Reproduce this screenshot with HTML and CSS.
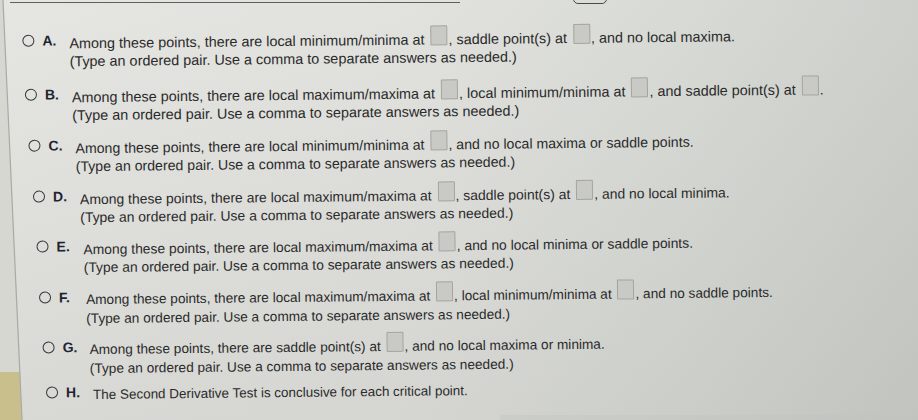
FILE: index.html
```html
<!DOCTYPE html>
<html lang="en">
<head>
<meta charset="utf-8">
<title>Second Derivative Test</title>
<link rel="stylesheet" href="styles.css">
</head>
<body>
<div class="screen">
  <div class="topbar">
    <div class="topline"></div>
    <div class="topbtn"></div>
  </div>
  <div class="options">
    <div class="opt">
      <span class="radio"></span><span class="letter">A.</span>
      <div class="txt">
        <div class="l1">Among these points, there are local minimum/minima at <span class="box"></span>, saddle point(s) at <span class="box"></span>, and no local maxima.</div>
        <div class="l2">(Type an ordered pair. Use a comma to separate answers as needed.)</div>
      </div>
    </div>
    <div class="opt">
      <span class="radio"></span><span class="letter">B.</span>
      <div class="txt">
        <div class="l1">Among these points, there are local maximum/maxima at <span class="box"></span>, local minimum/minima at <span class="box"></span>, and saddle point(s) at <span class="box"></span>.</div>
        <div class="l2">(Type an ordered pair. Use a comma to separate answers as needed.)</div>
      </div>
    </div>
    <div class="opt">
      <span class="radio"></span><span class="letter">C.</span>
      <div class="txt">
        <div class="l1">Among these points, there are local minimum/minima at <span class="box"></span>, and no local maxima or saddle points.</div>
        <div class="l2">(Type an ordered pair. Use a comma to separate answers as needed.)</div>
      </div>
    </div>
    <div class="opt">
      <span class="radio"></span><span class="letter">D.</span>
      <div class="txt">
        <div class="l1">Among these points, there are local maximum/maxima at <span class="box"></span>, saddle point(s) at <span class="box"></span>, and no local minima.</div>
        <div class="l2">(Type an ordered pair. Use a comma to separate answers as needed.)</div>
      </div>
    </div>
    <div class="opt">
      <span class="radio"></span><span class="letter">E.</span>
      <div class="txt">
        <div class="l1">Among these points, there are local maximum/maxima at <span class="box"></span>, and no local minima or saddle points.</div>
        <div class="l2">(Type an ordered pair. Use a comma to separate answers as needed.)</div>
      </div>
    </div>
    <div class="opt">
      <span class="radio"></span><span class="letter">F.</span>
      <div class="txt">
        <div class="l1">Among these points, there are local maximum/maxima at <span class="box"></span>, local minimum/minima at <span class="box"></span>, and no saddle points.</div>
        <div class="l2">(Type an ordered pair. Use a comma to separate answers as needed.)</div>
      </div>
    </div>
    <div class="opt">
      <span class="radio"></span><span class="letter">G.</span>
      <div class="txt">
        <div class="l1">Among these points, there are saddle point(s) at <span class="box"></span>, and no local maxima or minima.</div>
        <div class="l2">(Type an ordered pair. Use a comma to separate answers as needed.)</div>
      </div>
    </div>
    <div class="opt">
      <span class="radio"></span><span class="letter">H.</span>
      <div class="txt">
        <div class="l1">The Second Derivative Test is conclusive for each critical point.</div>
      </div>
    </div>
  </div>
</div>
</body>
</html>
```
FILE: styles.css
```css
html, body {
  margin: 0;
  padding: 0;
}
body {
  width: 918px;
  height: 420px;
  overflow: hidden;
  font-family: "Liberation Sans", Arial, sans-serif;
  color: #2a2a2a;
  background:
    url("data:image/svg+xml;utf8,<svg xmlns='http://www.w3.org/2000/svg' width='918' height='420' viewBox='0 0 918 420'><polygon points='0,0 3,0 22,420 0,420' fill='%23d6d7d1'/><polygon points='0,372 20,372 22,420 0,420' fill='%23c9bf8c'/><line x1='3' y1='0' x2='22' y2='420' stroke='%23a9aaa4' stroke-width='1.2'/><rect x='500' y='415' width='418' height='5' fill='%23bfc2bd' opacity='0.35'/></svg>") no-repeat 0 0,
    linear-gradient(to bottom, rgba(255,255,255,0.05), rgba(0,0,0,0.05)),
    linear-gradient(to right, #e4e4e0 0%, #e0e1dd 45%, #d6d8d3 75%, #cbcec9 100%);
}
.screen {
  width: 918px;
  height: 420px;
}
.topbar {
  display: flex;
  align-items: flex-start;
  height: 6px;
  overflow: hidden;
}
.topline {
  width: 450px;
  margin-left: 10px;
  margin-top: 2px;
  height: 0;
  border-top: 1.5px solid #5e5f5c;
}
.topbtn {
  width: 32px;
  height: 10px;
  margin-left: 113px;
  margin-top: -8px;
  border: 1.5px solid #4a4a48;
  border-radius: 5px;
}
.options {
  display: flex;
  flex-direction: column;
  padding-top: 28px;
  transform: rotate(-0.6deg);
  transform-origin: 0 0;
}
.opt {
  display: flex;
  align-items: flex-start;
}
.opt:nth-child(1) { margin-left: 22px; }
.opt:nth-child(2) { margin-left: 24px; margin-top: 17px; }
.opt:nth-child(3) { margin-left: 27px; margin-top: 14px; }
.opt:nth-child(4) { margin-left: 31px; margin-top: 14px; }
.opt:nth-child(5) { margin-left: 34px; margin-top: 13px; }
.opt:nth-child(6) { margin-left: 36px; margin-top: 14px; }
.opt:nth-child(7) { margin-left: 39px; margin-top: 13px; }
.opt:nth-child(8) { margin-left: 42px; margin-top: 8px; }
.opt:nth-child(1) .txt,
.opt:nth-child(2) .txt { font-size: 14.4px; }
.opt:nth-child(3) .txt { font-size: 14.15px; }
.opt:nth-child(4) .txt { font-size: 13.95px; }
.opt:nth-child(5) .txt { font-size: 13.85px; }
.opt:nth-child(6) .txt { font-size: 13.65px; }
.opt:nth-child(7) .txt { font-size: 13.65px; }
.opt:nth-child(8) .txt { font-size: 13.45px; }
.radio {
  flex: none;
  width: 10px;
  height: 10px;
  border: 1.6px solid #343536;
  border-radius: 50%;
  margin-top: 1px;
}
.letter {
  flex: none;
  width: 27px;
  margin-left: 8px;
  font-weight: bold;
  font-size: 14px;
  line-height: 14px;
  color: #1f2433;
}
.txt {
  white-space: nowrap;
}
.l1 {
  height: 20px;
  line-height: 20px;
}
.l2 {
  height: 17px;
  line-height: 17px;
}
.box {
  display: inline-block;
  box-sizing: border-box;
  width: 17px;
  height: 20px;
  margin-top: -6px;
  margin-left: 2px;
  margin-right: 1px;
  vertical-align: -1px;
  background-color: #c9cac5;
  border: 1px solid #a3a5a0;
  border-radius: 1px;
}
```
